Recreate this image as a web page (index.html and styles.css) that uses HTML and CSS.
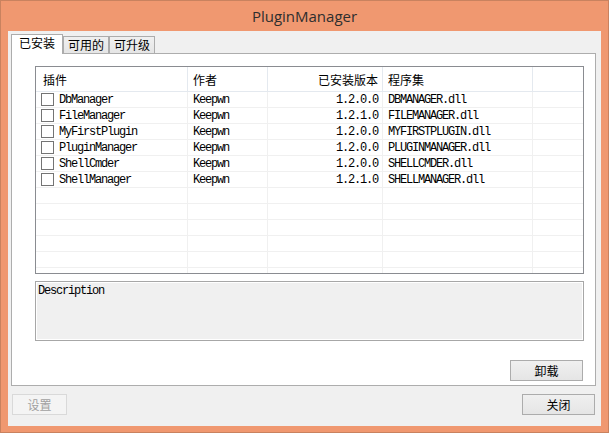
FILE: index.html
```html
<!DOCTYPE html>
<html lang="zh-CN">
<head>
<meta charset="utf-8">
<title>PluginManager</title>
<link rel="stylesheet" href="styles.css">
</head>
<body>
<div class="window">
  <div class="titlebar">PluginManager</div>
  <div class="client">
    <div class="tabs">
      <div class="tab active">已安装</div>
      <div class="tab">可用的</div>
      <div class="tab">可升级</div>
    </div>
    <div class="panel">
      <div class="list">
        <div class="row header">
          <div class="cell c1">插件</div>
          <div class="cell c2">作者</div>
          <div class="cell c3">已安装版本</div>
          <div class="cell c4">程序集</div>
          <div class="cell c5"></div>
        </div>
        <div class="row">
          <div class="cell c1"><span class="cb"></span><span class="mono">DbManager</span></div>
          <div class="cell c2 mono">Keepwn</div>
          <div class="cell c3 mono">1.2.0.0</div>
          <div class="cell c4 mono">DBMANAGER.dll</div>
          <div class="cell c5"></div>
        </div>
        <div class="row">
          <div class="cell c1"><span class="cb"></span><span class="mono">FileManager</span></div>
          <div class="cell c2 mono">Keepwn</div>
          <div class="cell c3 mono">1.2.1.0</div>
          <div class="cell c4 mono">FILEMANAGER.dll</div>
          <div class="cell c5"></div>
        </div>
        <div class="row">
          <div class="cell c1"><span class="cb"></span><span class="mono">MyFirstPlugin</span></div>
          <div class="cell c2 mono">Keepwn</div>
          <div class="cell c3 mono">1.2.0.0</div>
          <div class="cell c4 mono">MYFIRSTPLUGIN.dll</div>
          <div class="cell c5"></div>
        </div>
        <div class="row">
          <div class="cell c1"><span class="cb"></span><span class="mono">PluginManager</span></div>
          <div class="cell c2 mono">Keepwn</div>
          <div class="cell c3 mono">1.2.0.0</div>
          <div class="cell c4 mono">PLUGINMANAGER.dll</div>
          <div class="cell c5"></div>
        </div>
        <div class="row">
          <div class="cell c1"><span class="cb"></span><span class="mono">ShellCmder</span></div>
          <div class="cell c2 mono">Keepwn</div>
          <div class="cell c3 mono">1.2.0.0</div>
          <div class="cell c4 mono">SHELLCMDER.dll</div>
          <div class="cell c5"></div>
        </div>
        <div class="row">
          <div class="cell c1"><span class="cb"></span><span class="mono">ShellManager</span></div>
          <div class="cell c2 mono">Keepwn</div>
          <div class="cell c3 mono">1.2.1.0</div>
          <div class="cell c4 mono">SHELLMANAGER.dll</div>
          <div class="cell c5"></div>
        </div>
        <div class="row"><div class="cell c1"></div><div class="cell c2"></div><div class="cell c3"></div><div class="cell c4"></div><div class="cell c5"></div></div>
        <div class="row"><div class="cell c1"></div><div class="cell c2"></div><div class="cell c3"></div><div class="cell c4"></div><div class="cell c5"></div></div>
        <div class="row"><div class="cell c1"></div><div class="cell c2"></div><div class="cell c3"></div><div class="cell c4"></div><div class="cell c5"></div></div>
        <div class="row"><div class="cell c1"></div><div class="cell c2"></div><div class="cell c3"></div><div class="cell c4"></div><div class="cell c5"></div></div>
        <div class="row"><div class="cell c1"></div><div class="cell c2"></div><div class="cell c3"></div><div class="cell c4"></div><div class="cell c5"></div></div>
        <div class="row"><div class="cell c1"></div><div class="cell c2"></div><div class="cell c3"></div><div class="cell c4"></div><div class="cell c5"></div></div>
      </div>
      <div class="desc mono">Description</div>
      <div class="panel-actions">
        <button class="btn btn-uninstall">卸载</button>
      </div>
    </div>
    <div class="footer">
      <button class="btn btn-settings" disabled>设置</button>
      <button class="btn btn-close">关闭</button>
    </div>
  </div>
</div>
</body>
</html>
```
FILE: styles.css
```css
* { box-sizing: border-box; }

html, body {
  margin: 0;
  padding: 0;
  width: 609px;
  height: 433px;
  overflow: hidden;
  background: #f09870;
}

.window {
  width: 609px;
  height: 433px;
  border: 1px solid #c9825f;
  background: #f09870;
  padding: 0 7px 6px 7px;
  display: flex;
  flex-direction: column;
}

.titlebar {
  height: 30px;
  line-height: 30px;
  text-align: center;
  font-family: "Open Sans", "Noto Sans", sans-serif;
  font-size: 15px;
  color: #2e2e2e;
  flex: none;
}

.client {
  flex: 1;
  background: #f0f0f0;
  display: flex;
  flex-direction: column;
}

.tabs {
  display: flex;
  align-items: flex-end;
  height: 19px;
  margin: 3px 0 0 3px;
  font-family: "Noto Sans CJK SC", sans-serif;
  font-size: 12px;
  color: #000;
}

.tab {
  height: 17px;
  width: 46px;
  border: 1px solid #acacac;
  border-bottom: none;
  background: linear-gradient(#f0f0f0, #e5e5e5);
  text-align: center;
  line-height: 16px;
}

.tab.active {
  width: 52px;
  height: 20px;
  margin-bottom: -1px;
  background: #fff;
  position: relative;
  z-index: 1;
}

.tab.active + .tab { margin-left: 0; }

.panel {
  width: 585px;
  height: 333px;
  margin-left: 3px;
  border: 1px solid #adadad;
  background: #fff;
  padding: 12px 0 0 23px;
  flex: none;
}

.list {
  width: 549px;
  height: 208px;
  border: 1px solid #8a8c91;
  overflow: hidden;
  background: #fff;
}

.row {
  display: grid;
  grid-template-columns: 152px 80px 115px 150px 1fr;
  height: 16px;
  border-bottom: 1px solid #f0f0f0;
}

.cell {
  border-right: 1px solid #f0f0f0;
  padding-top: 1px;
  line-height: 14px;
  white-space: nowrap;
  overflow: hidden;
  color: #000;
}

.cell.c5 { border-right: none; }

.row.header {
  height: 25px;
  border-bottom: 1px solid #e4e9ef;
}

.row.header .cell {
  border-right-color: #e4e9ef;
  font-family: "Noto Sans CJK SC", sans-serif;
  font-size: 12px;
  line-height: 23px;
}

.row.header .cell.c5 { border-right: none; }

.mono {
  font-family: "Liberation Mono", "Courier New", monospace;
  font-size: 12px;
  letter-spacing: -1.2px;
  color: #000;
}

.c1 {
  padding-left: 5px;
  display: flex;
  align-items: flex-start;
  gap: 5px;
}

.row.header .c1 { padding-left: 7px; }

.c2 { padding-left: 5px; }
.c3 { text-align: right; padding-right: 4px; }
.c4 { padding-left: 5px; }

.cb {
  width: 13px;
  height: 13px;
  border: 1px solid #747474;
  background: #fff;
  flex: none;
}

.desc {
  margin-top: 7px;
  width: 549px;
  height: 60px;
  border: 1px solid #a7a7a7;
  box-shadow: inset 0 0 0 1px #fff;
  background: #f0f0f0;
  padding: 2px 2px;
  line-height: 14px;
}

.panel-actions {
  margin-top: 19px;
  width: 548px;
  display: flex;
  justify-content: flex-end;
}

.btn {
  height: 21px;
  width: 73px;
  padding: 0;
  margin: 0;
  border: 1px solid #acacac;
  background: linear-gradient(#f0f0f0, #e5e5e5);
  font-family: "Noto Sans CJK SC", sans-serif;
  font-size: 12px;
  color: #000;
  line-height: 18px;
  border-radius: 0;
}

.btn-settings {
  width: 55px;
  border-color: #d9d9d9;
  background: #f4f4f4;
  color: #a0a0a0;
}

.footer {
  margin-top: 8px;
  padding: 0 6px 0 4px;
  display: flex;
  justify-content: space-between;
}
```
